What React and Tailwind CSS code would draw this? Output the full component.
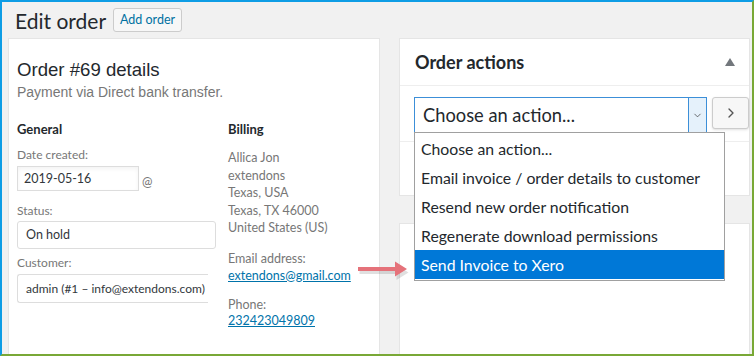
import { ChevronDown, ChevronRight } from "lucide-react";

const seg = { fontFamily: "Lato, 'Open Sans', sans-serif" };
const arial = { fontFamily: "'Liberation Sans', Arial, sans-serif" };

const actions = [
  "Choose an action...",
  "Email invoice / order details to customer",
  "Resend new order notification",
  "Regenerate download permissions",
  "Send Invoice to Xero",
];

export default function App() {
  return (
    <div
      className="relative w-[754px] h-[356px] overflow-hidden bg-[#f1f1f1] border-2 border-t-[#0e9de5] border-l-[#0e9de5] border-r-[#79a836] border-b-[#79a836]"
      style={seg}
    >
      {/* header */}
      <div className="h-[36px] flex items-center pl-[13px]">
        <h1 className="text-[21px] text-[#23282d] leading-none mr-[7px]">Edit order</h1>
        <button className="h-[24px] w-[69px] text-[12.5px] text-[#0071a1] bg-[#f7f7f7] border border-[#ccc] rounded-[3px]">
          Add order
        </button>
      </div>

      <div className="flex">
        {/* order data */}
        <div className="ml-[6px] w-[372px] h-[320px] bg-white border border-[#e5e5e5] pl-[8px] pt-[19px]">
          <h2 className="text-[18.6px] leading-[24px] text-[#23282d]" style={arial}>Order #69 details</h2>
          <p className="text-[14px] leading-[18px] text-[#777] mt-[1px]" style={arial}>
            Payment via Direct bank transfer.
          </p>

          <div className="flex mt-[19px]">
            <div className="w-[211px]">
              <h3 className="text-[13px] font-bold text-[#23282d] leading-[18px] mb-[8px]">General</h3>
              <div className="text-[12px] leading-[18px] text-[#777] mb-[2px]">Date created:</div>
              <div className="flex items-end">
                <div className="w-[122px] h-[25px] border border-[#ddd] shadow-inner px-[6px] text-[12.5px] leading-[23px] text-[#32373c]">
                  2019-05-16
                </div>
                <span className="ml-[3px] text-[12.5px] text-[#777] leading-[18px]">@</span>
              </div>

              <div className="mt-[11px] text-[12px] leading-[18px] text-[#777] mb-[1px]">Status:</div>
              <div className="w-[199px] h-[28px] border border-[#ddd] rounded-[3px] px-[8px] text-[12.5px] leading-[26px] text-[#32373c]">
                On hold
              </div>

              <div className="mt-[5px] text-[12px] leading-[18px] text-[#777] mb-[2px]">Customer:</div>
              <div className="w-[191px] h-[29px] border border-[#ddd] border-r-0 rounded-l-[3px] pl-[8px] text-[12px] leading-[27px] text-[#32373c] whitespace-nowrap">
                admin (#1 – info@extendons.com)
              </div>
            </div>

            <div className="text-[12.5px] text-[#777]">
              <h3 className="text-[13px] font-bold text-[#23282d] leading-[18px] mb-[11px]">Billing</h3>
              <div className="leading-[17.5px]">
                <div>Allica Jon</div>
                <div>extendons</div>
                <div>Texas, USA</div>
                <div>Texas, TX 46000</div>
                <div>United States (US)</div>
              </div>
              <div className="mt-[13px] leading-[17px]">Email address:</div>
              <a className="block leading-[17px] text-[#0073aa] underline">extendons@gmail.com</a>
              <div className="mt-[12px] leading-[17px]">Phone:</div>
              <a className="block leading-[16px] text-[#0073aa] underline">232423049809</a>
            </div>
          </div>
        </div>

        {/* side column */}
        <div className="ml-[19px] w-[351px] flex flex-col">
          <div className="relative h-[158px] bg-white border border-[#e5e5e5]">
            <div className="h-[47px] flex items-center justify-between pl-[15px] pr-[14px] border-b border-[#eee]">
              <span className="text-[18px] font-bold text-[#23282d]">Order actions</span>
              <svg width="10" height="8" viewBox="0 0 10 8">
                <path d="M5 0 L10 8 L0 8 Z" fill="#72777c" />
              </svg>
            </div>
            <div className="flex items-start pl-[14px] pt-[11px] h-[56px] border-b border-[#eee]">
              <div className="w-[295px] h-[36px] border border-[#3c8fd8] flex items-center">
                <span className="flex-1 pl-[8px] text-[18.3px] text-[#23282d] leading-none">Choose an action...</span>
                <div className="w-[18px] h-full bg-[#e5f1fb] border-l border-[#3c8fd8] flex items-center justify-center">
                  <ChevronDown size={11} strokeWidth={1.5} color="#333" />
                </div>
              </div>
              <button className="ml-[5px] w-[37px] h-[32px] bg-[#f7f7f7] border border-[#ccc] rounded-[3px] shadow-sm flex items-center justify-center">
                <ChevronRight size={16} strokeWidth={2} color="#555" />
              </button>
            </div>

            {/* open dropdown */}
            <ul className="absolute left-[14px] top-[93px] w-[311px] bg-white border border-[#a0a0a0] py-[1px] z-10">
              {actions.map((a, i) => (
                <li
                  key={a}
                  className={
                    i === actions.length - 1
                      ? "h-[29px] pl-[6px] text-[15.8px] leading-[29px] bg-[#0078d7] text-white"
                      : "h-[29px] pl-[6px] text-[15.8px] leading-[29px] text-[#23282d]"
                  }
                >
                  {a}
                </li>
              ))}
            </ul>
          </div>
          <div className="mt-[27px] h-[140px] bg-white border border-[#e5e5e5]" />
        </div>
      </div>

      {/* pointer arrow */}
      <svg className="absolute left-[351px] top-[255px]" width="62" height="26" viewBox="0 0 62 26">
        <path d="M5 12 L42 12 L42 6 L54 13.5 L42 21 L42 15 L5 15 Z" fill="#000" opacity="0.12" transform="translate(1.5 2)" />
        <path d="M5 10 L42 10 L42 4.5 L54 12 L42 19.5 L42 14 L5 14 Z" fill="#e5727a" />
      </svg>
    </div>
  );
}
